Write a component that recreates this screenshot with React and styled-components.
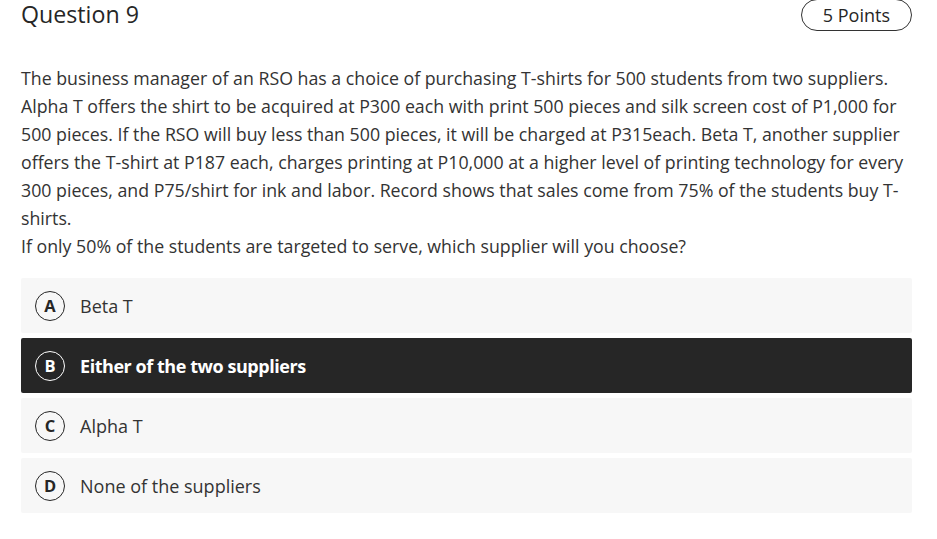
import React from "react";
import styled, { createGlobalStyle } from "styled-components";

const GlobalStyle = createGlobalStyle`
  body {
    margin: 0;
    background: #ffffff;
    font-family: "Open Sans", "Noto Sans", sans-serif;
    color: #333333;
  }
`;

const Page = styled.div`
  padding: 0 25px 0 21px;
`;

const Header = styled.div`
  display: flex;
  justify-content: space-between;
  align-items: flex-start;
  height: 32px;
`;

const Title = styled.h2`
  margin: 0;
  font-size: 23.2px;
  font-weight: 400;
  line-height: 29px;
  color: #262626;
`;

const Points = styled.div`
  box-sizing: border-box;
  height: 32px;
  margin-top: -1px;
  padding: 0 21px 0 21px;
  border: 1px solid #333333;
  border-radius: 16px;
  display: flex;
  align-items: center;
  font-size: 18px;
  line-height: 24px;
  color: #262626;
`;

const Prompt = styled.p`
  margin: 32px 0 0 0;
  font-size: 17.75px;
  line-height: 28px;
  color: #333333;
`;

const Options = styled.div`
  display: flex;
  flex-direction: column;
  gap: 5px;
  margin-top: 18px;
`;

const Option = styled.div`
  box-sizing: border-box;
  height: 55px;
  display: flex;
  align-items: center;
  gap: 15px;
  padding-left: 14px;
  border-radius: 2px;
  background: ${(p) => (p.$selected ? "#262626" : "#f7f7f7")};
  color: ${(p) => (p.$selected ? "#ffffff" : "#333333")};
  font-size: 18px;
  font-weight: ${(p) => (p.$selected ? 700 : 400)};
  letter-spacing: ${(p) => (p.$selected ? "-0.45px" : "0")};
`;

const Letter = styled.span`
  box-sizing: border-box;
  flex-shrink: 0;
  width: 30px;
  height: 30px;
  border-radius: 50%;
  border: 1.5px solid ${(p) => (p.$selected ? "#ffffff" : "#262626")};
  display: flex;
  align-items: center;
  justify-content: center;
  font-size: 16.5px;
  font-weight: 700;
  letter-spacing: 0;
  color: ${(p) => (p.$selected ? "#ffffff" : "#262626")};
`;

const choices = [
  { key: "A", label: "Beta T" },
  { key: "B", label: "Either of the two suppliers", selected: true },
  { key: "C", label: "Alpha T" },
  { key: "D", label: "None of the suppliers" },
];

const App = () => {
  return (
    <Page>
      <GlobalStyle />
      <Header>
        <Title>Question 9</Title>
        <Points>5 Points</Points>
      </Header>
      <Prompt>
        The business manager of an RSO has a choice of purchasing T-shirts for
        500 students from two suppliers. Alpha T offers the shirt to be acquired
        at P300 each with print 500 pieces and silk screen cost of P1,000 for
        500 pieces. If the RSO will buy less than 500 pieces, it will be charged
        at P315each. Beta T, another supplier offers the T-shirt at P187 each,
        charges printing at P10,000 at a higher level of printing technology for
        every 300 pieces, and P75/shirt for ink and labor. Record shows that
        sales come from 75% of the students buy T-shirts.
        <br />
        If only 50% of the students are targeted to serve, which supplier will
        you choose?
      </Prompt>
      <Options>
        {choices.map((c) => (
          <Option key={c.key} $selected={c.selected}>
            <Letter $selected={c.selected}>{c.key}</Letter>
            {c.label}
          </Option>
        ))}
      </Options>
    </Page>
  );
};

export default App;
